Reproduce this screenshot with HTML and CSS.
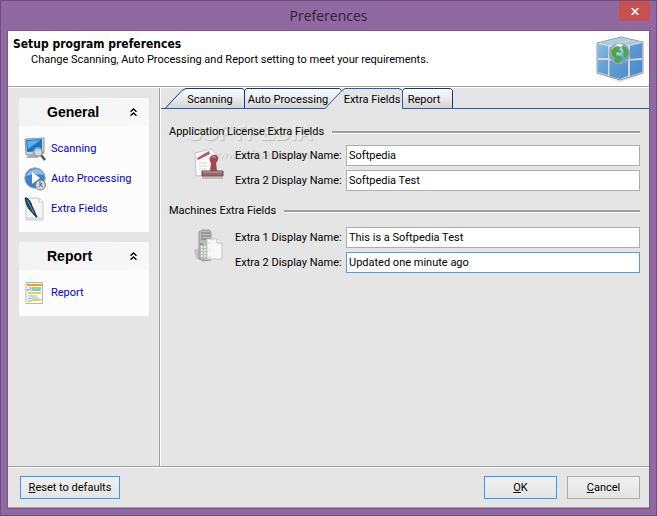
FILE: index.html
```html
<!DOCTYPE html>
<html lang="en">
<head>
<meta charset="utf-8">
<title>Preferences</title>
<link rel="stylesheet" href="styles.css">
</head>
<body>
<div class="window">
  <header class="titlebar">
    <h1 class="title">Preferences</h1>
    <button class="close" type="button" aria-label="Close">
      <svg width="8" height="7" viewBox="0 0 8 7"><path d="M.7 0 7.3 7M7.3 0 .7 7" stroke="#fff" stroke-width="1.7"/></svg>
    </button>
  </header>
  <form class="client">
    <section class="banner">
      <div class="banner-text">
        <h2>Setup program preferences</h2>
        <p>Change Scanning, Auto Processing and Report setting to meet your requirements.</p>
      </div>
      <svg class="cube" width="48" height="46" viewBox="0 0 48 46">
        <defs>
          <linearGradient id="face" gradientUnits="userSpaceOnUse" x1="0" y1="8" x2="40" y2="40"><stop offset="0" stop-color="#94bfe6"/><stop offset=".4" stop-color="#659fd6"/><stop offset="1" stop-color="#4a8bc9"/></linearGradient>
          <radialGradient id="sea" cx=".35" cy=".3"><stop offset="0" stop-color="#dff3fa"/><stop offset="1" stop-color="#56a9d4"/></radialGradient>
        </defs>
        <path d="M3 38 23 45l22-8-3 3-19 6z" fill="#bbb" opacity=".6"/>
        <path d="M1 7 25 1l22 5v31L24 44 1 37z" fill="#d3dae0" stroke="#8b98a5"/>
        <path d="M3 7 14 4l10 2-11 3zM16 4l9-2 9 2-9 2zM36 4l9 2-10 3-9-2zM15 10l10-3 8 2-9 2z" fill="#a9cbe6"/>
        <path d="M2 8l10 2v12H2zM2 24h10v15L2 36zM13.500 11l9 1 9-1v12h-18zM13.500 24.500H32V40l-8 3-10.500-3zM34 10l12-3v15l-12 1zM34 24.500 46 24v12l-12 4z" fill="url(#face)"/>
        <circle cx="23.500" cy="17.500" r="10" fill="url(#sea)" stroke="#a1a5a2" stroke-width="1.5"/>
        <path d="M15 15q2-4 7-5l3 1-2 3 3 1-3 2-2-1-1 3 4 1 3 2-2 2-3 3-3-1v-4l-3-2zM27 10q5 2 5 7l-2 5-2-1-1-4 1-2-2-3z" fill="#57a344"/>
        <path d="M19 9q5-3 8 0l-3 2z" fill="#eef7f4"/>
      </svg>
    </section>
    <div class="body">
      <nav class="sidebar">
        <section class="group">
          <h3 class="group-head"><span>General</span><button type="button" class="chevrons" aria-label="Collapse General"><svg width="7" height="8" viewBox="0 0 7 8"><path d="M.5 3.8 3.5 1l3 2.8M.5 7.8 3.5 5l3 2.8" fill="none" stroke="#000" stroke-width="1.3"/></svg></button></h3>
          <ul>
            <li><a href="#scanning">
              <svg width="22" height="24" viewBox="0 0 22 24"><path d="M1 2 20 1v15L2 18z" fill="#d0d3d4" stroke="#8e979b"/><path d="M2 3 18 2v12L3 15z" fill="#1673c8"/><path d="M3 4 17 3 4 12z" fill="#5bb0ef"/><path d="M5 17h8l1 4H2z" fill="#a9afb2"/><path d="m17 18 4 5" stroke="#55524e" stroke-width="2.5"/><circle cx="14" cy="15" r="4.2" fill="#c9e3f0" fill-opacity=".85" stroke="#8c989d" stroke-width="1.4"/></svg>
              Scanning</a></li>
            <li><a href="#auto">
              <svg width="22" height="24" viewBox="0 0 22 24"><circle cx="11" cy="11" r="10.3" fill="#3e7fc6" stroke="#a3b5c7"/><path d="M2 9Q5 2 12 2q6 0 8 6-9-2-18 1z" fill="#94bce5"/><path d="m8 5 8 6-8 6z" fill="#fff"/><circle cx="16.500" cy="18" r="5" fill="#ced7de" stroke="#71808c"/><path d="M16 14v4l3 2m-1-4-3 4" fill="none" stroke="#5b6874"/></svg>
              Auto Processing</a></li>
            <li><a href="#extra">
              <svg width="22" height="24" viewBox="0 0 22 24"><path d="M2 1h13l4 4v18H2z" fill="#f4f4f4" stroke="#c8c8c8"/><path d="M15 1v4h4" fill="#fff" stroke="#c8c8c8"/><path d="M3 20h15v2H3z" fill="#ddd"/><path d="M1 1h2q4 3 5 8l5 11h-1L5 12Q2 8 1 1z" fill="#1d466d" stroke="#1d364d"/><path d="m3 3 7 13" stroke="#7fa1bf" stroke-width=".8"/></svg>
              Extra Fields</a></li>
          </ul>
        </section>
        <section class="group">
          <h3 class="group-head"><span>Report</span><button type="button" class="chevrons" aria-label="Collapse Report"><svg width="7" height="8" viewBox="0 0 7 8"><path d="M.5 3.8 3.5 1l3 2.8M.5 7.8 3.5 5l3 2.8" fill="none" stroke="#000" stroke-width="1.3"/></svg></button></h3>
          <ul>
            <li><a href="#report">
              <svg width="22" height="24" viewBox="0 0 22 24"><path d="M2 1.500h16.500v21H2z" fill="#fff" stroke="#aeb8b3"/><path d="M3 3h15v2H3z" fill="#f19b35"/><path d="M5 6h12v2H5z" fill="#a8d65b"/><path d="M3 9h2M6 9h11" stroke="#46b5e6" stroke-width="1.5"/><path d="M4 12h3M8 12h9M4 20h3M8 19h9" stroke="#f3cb4b" stroke-width="2"/><path d="M4 15h3M8 15h5M4 17.500h3M8 17h7" stroke="#65c1e8"/><path d="M7.500 6v15" stroke="#d6dcda"/></svg>
              Report</a></li>
          </ul>
        </section>
      </nav>
      <main class="content">
        <div class="tabstrip" role="tablist">
          <svg class="tab-shapes" width="292" height="21" viewBox="0 0 292 21" aria-hidden="true">
            <defs><linearGradient id="tab" x1="0" y1="0" x2="0" y2="1"><stop offset="0" stop-color="#fff"/><stop offset="1" stop-color="#d4d4d6"/></linearGradient></defs>
            <path d="M4 20.500 21 2.500l4-2h56l2 2v18z" fill="url(#tab)"/>
            <path d="M83.500 20.500v-18l2-2h93l2 2v18z" fill="url(#tab)"/>
            <path d="M241.500 20.500v-18l2-2h46l2 2v18z" fill="url(#tab)"/>
            <path d="M4 20.500 21 2.500l4-2h56l2.500 2v18M83.500 2.500l2-2h93l2 2M241.500 20.500v-18l2-2h46l2 2v18" fill="none" stroke="#073794"/>
            <path d="M164 21 180 3.500l4-3h54l3.500 2V21z" fill="#e5e5e5"/>
            <path d="M0 20.500h164L180 3.500l4-3h54l3.500 2v18H292" fill="none" stroke="#2c5ea8"/>
          </svg>
          <button type="button" role="tab" class="tab tab-scanning" aria-selected="false">Scanning</button>
          <button type="button" role="tab" class="tab tab-auto" aria-selected="false">Auto Processing</button>
          <button type="button" role="tab" class="tab tab-extra" aria-selected="true">Extra Fields</button>
          <button type="button" role="tab" class="tab tab-report" aria-selected="false">Report</button>
        </div>
        <div class="panel">
          <div class="watermark" aria-hidden="true"><span class="mark-name">SOFTPEDIA</span><span class="mark-site">www.softpedia.com</span></div>
          <fieldset>
            <legend>Application License Extra Fields</legend>
            <div class="fields">
              <svg class="field-icon" width="32" height="34" viewBox="0 0 32 34"><path d="M2 6 18 2l5 4v22l-20 1z" fill="#f8f8f8" stroke="#c5c5c5"/><path d="m4 11 12-7 1 3-12 6z" fill="#b45a60"/><path d="M6 16h8M6 19h8M6 22h7" stroke="#ddd"/><path d="M18 9q5-3 7 1 1 3-2 6l1 8h-7l1-8q-3-4 0-7z" fill="#9c4b52"/><path d="M19 10q3-1 4 1" stroke="#d9a4a6" fill="none"/><path d="M9 24h21v5H9z" fill="#93696b" stroke="#6c4a4b"/><path d="M10 25h19" stroke="#c5a0a0"/><path d="M9 30h21v2H9z" fill="#c7b9b9"/></svg>
              <div class="rows">
                <div class="row"><label for="a1">Extra 1 Display Name:</label><input id="a1" type="text" value="Softpedia"></div>
                <div class="row"><label for="a2">Extra 2 Display Name:</label><input id="a2" type="text" value="Softpedia Test"></div>
              </div>
            </div>
          </fieldset>
          <fieldset>
            <legend>Machines Extra Fields</legend>
            <div class="fields fields-machines">
              <svg class="field-icon" width="32" height="34" viewBox="0 0 32 34"><path d="M1 21 9 17v14l-6-1z" fill="#c6c6c6"/><path d="M6 3 9 1h7l2 2v28l-8 1-4-2z" fill="#b9b9b9" stroke="#999"/><path d="M8 4h9M8 7h9M8 10h9" stroke="#777"/><path d="M7 14h3v2H7z" fill="#52ca2c"/><path d="M8 18h6M8 21h6M8 24h6M8 27h6" stroke="#f3f3f3" stroke-width="1.5" stroke-dasharray="2 1"/><path d="M14 10h10l5 4v16H14z" fill="#f8f8f8" stroke="#c6c6c6"/><path d="M24 10v4h5" fill="#fff" stroke="#bbb"/><path d="M16.500 13v17" stroke="#ccc" stroke-dasharray="2 5"/></svg>
              <div class="rows">
                <div class="row"><label for="m1">Extra 1 Display Name:</label><input id="m1" type="text" value="This is a Softpedia Test"></div>
                <div class="row"><label for="m2">Extra 2 Display Name:</label><input id="m2" class="active" type="text" value="Updated one minute ago"></div>
              </div>
            </div>
          </fieldset>
        </div>
      </main>
    </div>
    <footer class="footer">
      <button type="button" class="btn btn-reset"><u>R</u>eset to defaults</button>
      <button type="button" class="btn btn-ok"><u>O</u>K</button>
      <button type="button" class="btn btn-cancel"><u>C</u>ancel</button>
    </footer>
  </form>
</div>
</body>
</html>
```

FILE: styles.css
```css
* { box-sizing: border-box; }
body {
  margin: 0;
  font: 11px/16px Roboto, "Liberation Sans", sans-serif;
  color: #000;
}
h1, h2, h3, p, ul { margin: 0; padding: 0; }
ul { list-style: none; }
svg { display: block; flex: none; }
button, input { font: inherit; color: inherit; }

.window {
  display: flex;
  flex-direction: column;
  min-height: 100vh;
  padding: 0 6px 6px;
  background: #9068a2;
  border: 1px solid #6d4d7b;
}
.titlebar {
  display: flex;
  height: 29px;
  position: relative;
  justify-content: center;
  align-items: center;
}
.title {
  font: 14px/20px "Open Sans", sans-serif;
  color: #2d2333;
}
.close {
  position: absolute;
  top: 0;
  right: 0;
  width: 31px;
  height: 20px;
  display: flex;
  align-items: center;
  justify-content: center;
  padding: 0;
  border: 0;
  background: #c75050;
}

.client {
  flex: 1;
  display: flex;
  flex-direction: column;
  background: #e5e5e5;
  border: 1px solid #7b588a;
}
.banner {
  display: flex;
  justify-content: space-between;
  height: 56px;
  padding: 5px 5px 0;
  background: #fff;
  border-bottom: 1px solid #a0a0a0;
}
.banner h2 { font: bold 12px/16px "DejaVu Sans Condensed", "Noto Sans", sans-serif; }
.banner p { padding-left: 18px; }

.body {
  flex: 1;
  display: flex;
  border-top: 1px solid #fff;
  border-bottom: 1px solid #a0a0a0;
}
.sidebar {
  width: 152px;
  padding: 10px 10px 10px 11px;
  display: flex;
  flex-direction: column;
  gap: 10px;
  border-right: 1px solid #a0a0a0;
}
.group {
  background: #fcfcfc;
  border-radius: 4px 4px 0 0;
  overflow: hidden;
}
.group-head {
  display: flex;
  align-items: center;
  justify-content: space-between;
  height: 28px;
  padding: 0 12px 0 28px;
  font: bold 14px/20px "Liberation Sans", sans-serif;
  background: linear-gradient(90deg, #f3f3f3, #f8f8f8);
}
.chevrons { padding: 0; border: 0; background: none; }
.group ul { padding: 8px 0 8px 5px; }
.group li { height: 30px; }
.group a {
  display: flex;
  align-items: center;
  gap: 5px;
  height: 30px;
  color: #0000e0;
  text-decoration: none;
}

.content {
  flex: 1;
  border-left: 1px solid #fff;
}
.tabstrip {
  display: flex;
  height: 21px;
  position: relative;
  border-bottom: 1px solid #2c5ea8;
}
.tab-shapes { position: absolute; left: 0; top: 0; }
.tab {
  position: relative;
  padding: 3px 0 0;
  border: 0;
  background: none;
  text-align: center;
  white-space: nowrap;
}
.tab-scanning { width: 83px; padding-left: 15px; }
.tab-auto { width: 88px; }
.tab-extra { width: 70px; padding-left: 10px; }
.tab-report { width: 44px; }

.panel {
  position: relative;
  display: flex;
  flex-direction: column;
  gap: 12px;
  padding: 15px 9px 0 8px;
}
.watermark {
  position: absolute;
  left: 26px;
  top: 12px;
  color: #eee;
  opacity: 0.5;
  text-shadow: 1px 1px 1px #999;
}
.mark-name { display: block; font: bold 22px/24px "Liberation Sans", sans-serif; }
.mark-site { display: block; padding-left: 24px; line-height: 20px; }
fieldset {
  position: relative;
  min-width: 0;
  margin: 0;
  padding: 0;
  border: 0;
}
legend {
  display: flex;
  align-items: center;
  gap: 8px;
  width: 100%;
  padding: 0;
  white-space: nowrap;
}
legend::after {
  content: "";
  flex: 1;
  height: 2px;
  background: #a0a0a0;
  border-bottom: 1px solid #fff;
}
.fields {
  display: flex;
  padding: 5px 0 0 24px;
}
.fields-machines { padding-top: 8px; }
.field-icon { margin-top: 2px; }
.rows {
  flex: 1;
  display: flex;
  flex-direction: column;
  gap: 4px;
  padding-left: 10px;
}
.row { display: flex; align-items: center; }
.row label { width: 111px; padding-top: 1px; white-space: nowrap; }
.row input {
  flex: 1;
  min-width: 0;
  height: 21px;
  padding: 0 2px;
  background: #fff;
  border: 1px solid #abadb3;
  outline: 0;
}
.row .active { border-color: #569de5; }

.footer {
  display: flex;
  align-items: center;
  gap: 10px;
  height: 41px;
  padding: 0 9px 0 12px;
  border-top: 1px solid #fff;
  border-bottom: 1px solid #a0a0a0;
}
.btn {
  height: 23px;
  padding: 0;
  background: linear-gradient(#f0f0f0, #e5e5e5);
  border: 1px solid #acacac;
}
.btn-reset { width: 100px; margin-right: auto; border-color: #3399ff; }
.btn-ok { width: 73px; border-color: #3399ff; }
.btn-cancel { width: 73px; }
```
